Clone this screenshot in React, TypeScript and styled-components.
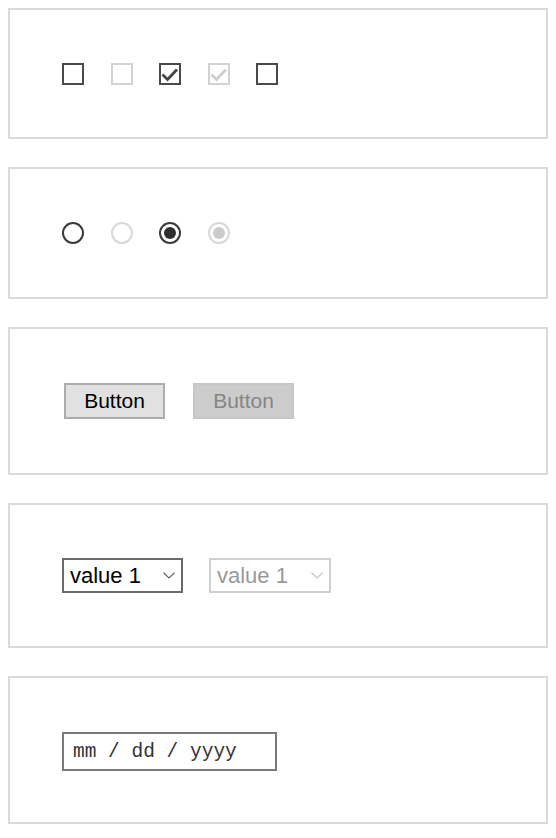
import { ReactNode } from "react";
import styled, { createGlobalStyle } from "styled-components";

const GlobalStyle = createGlobalStyle`
  body {
    margin: 8px;
    background: #ffffff;
    font-family: "Liberation Sans", Arial, sans-serif;
  }
`;

const Stack = styled.div`
  display: flex;
  flex-direction: column;
  gap: 28px;
  width: 540px;
`;

const Panel = styled.section<{ $height: number }>`
  box-sizing: border-box;
  height: ${(p) => p.$height}px;
  border: 2px solid #dadada;
  padding-left: 52px;
  display: flex;
  align-items: center;
`;

const Row = styled.div<{ $gap: number }>`
  display: flex;
  align-items: center;
  gap: ${(p) => p.$gap}px;
`;

const Check = styled.span<{ $disabled?: boolean }>`
  box-sizing: border-box;
  width: 22px;
  height: 22px;
  border: 2px solid ${(p) => (p.$disabled ? "#d2d2d2" : "#4a4a4a")};
  background: #fff;
  display: flex;
  align-items: center;
  justify-content: center;
  color: ${(p) => (p.$disabled ? "#cfcfcf" : "#444")};
  margin-right: 4.5px;
`;

const Radio = styled.span<{ $disabled?: boolean }>`
  box-sizing: border-box;
  width: 22px;
  height: 22px;
  border-radius: 50%;
  border: 2px solid ${(p) => (p.$disabled ? "#d8d8d8" : "#3a3a3a")};
  background: #fff;
  display: flex;
  align-items: center;
  justify-content: center;
  margin-right: 4.5px;
`;

const Dot = styled.span<{ $disabled?: boolean }>`
  width: 12px;
  height: 12px;
  border-radius: 50%;
  background: ${(p) => (p.$disabled ? "#cbcbcb" : "#2e2e2e")};
`;

const Button = styled.button<{ $disabled?: boolean }>`
  box-sizing: border-box;
  width: 101px;
  height: 36px;
  padding: 0;
  margin-left: 2px;
  font-family: "Liberation Sans", Arial, sans-serif;
  font-size: 21px;
  color: ${(p) => (p.$disabled ? "#858585" : "#000")};
  background: ${(p) => (p.$disabled ? "#cccccc" : "#e1e1e1")};
  border: 2px solid ${(p) => (p.$disabled ? "#c6c6c6" : "#adadad")};
  border-radius: 0;
`;

const SelectWrap = styled.div`
  position: relative;
  display: flex;
`;

const Select = styled.select<{ $disabled?: boolean; $width: number }>`
  appearance: none;
  box-sizing: border-box;
  width: ${(p) => p.$width}px;
  height: 35px;
  padding: 0 0 0 6px;
  font-family: "Liberation Sans", Arial, sans-serif;
  font-size: 22px;
  color: ${(p) => (p.$disabled ? "#999" : "#000")};
  background: #fff;
  border: 2px solid ${(p) => (p.$disabled ? "#d0d0d0" : "#6a6a6a")};
  border-radius: 0;
  opacity: 1;
`;

const Chevron = styled.svg<{ $disabled?: boolean }>`
  position: absolute;
  right: 8px;
  top: 14px;
  width: 12px;
  height: 7px;
  color: ${(p) => (p.$disabled ? "#c4c4c4" : "#666")};
  pointer-events: none;
`;

const DateBox = styled.div`
  box-sizing: border-box;
  width: 215px;
  height: 39px;
  border: 2px solid #7a7a7a;
  display: flex;
  align-items: center;
  padding-left: 9px;
  margin-top: 3px;
  font-family: "Liberation Mono", "Courier New", monospace;
  font-size: 19.5px;
  color: #333;
`;

function CheckMark() {
  return (
    <svg width="18" height="18" viewBox="0 0 18 18" fill="none">
      <polyline
        points="1.5,9.5 6.5,14.5 16,4.5"
        stroke="currentColor"
        strokeWidth="2.8"
        strokeLinejoin="miter"
      />
    </svg>
  );
}

function Dropdown({ disabled, width }: { disabled?: boolean; width: number }) {
  return (
    <SelectWrap>
      <Select $disabled={disabled} $width={width} disabled={disabled} defaultValue="1">
        <option value="1">value 1</option>
        <option value="2">value 2</option>
      </Select>
      <Chevron $disabled={disabled} viewBox="0 0 12 7" fill="none">
        <polyline points="0.5,0.8 6,6 11.5,0.8" stroke="currentColor" strokeWidth="1.2" />
      </Chevron>
    </SelectWrap>
  );
}

function Box({ height, gap, children }: { height: number; gap: number; children: ReactNode }) {
  return (
    <Panel $height={height}>
      <Row $gap={gap}>{children}</Row>
    </Panel>
  );
}

export default function App() {
  return (
    <>
      <GlobalStyle />
      <Stack>
        <Box height={131} gap={22}>
          <Check />
          <Check $disabled />
          <Check>
            <CheckMark />
          </Check>
          <Check $disabled>
            <CheckMark />
          </Check>
          <Check />
        </Box>
        <Box height={132} gap={22}>
          <Radio />
          <Radio $disabled />
          <Radio>
            <Dot />
          </Radio>
          <Radio $disabled>
            <Dot $disabled />
          </Radio>
        </Box>
        <Box height={148} gap={26}>
          <Button>Button</Button>
          <Button $disabled disabled>
            Button
          </Button>
        </Box>
        <Box height={145} gap={26}>
          <Dropdown width={121} />
          <Dropdown width={122} disabled />
        </Box>
        <Box height={148} gap={0}>
          <DateBox>mm / dd / yyyy</DateBox>
        </Box>
      </Stack>
    </>
  );
}
